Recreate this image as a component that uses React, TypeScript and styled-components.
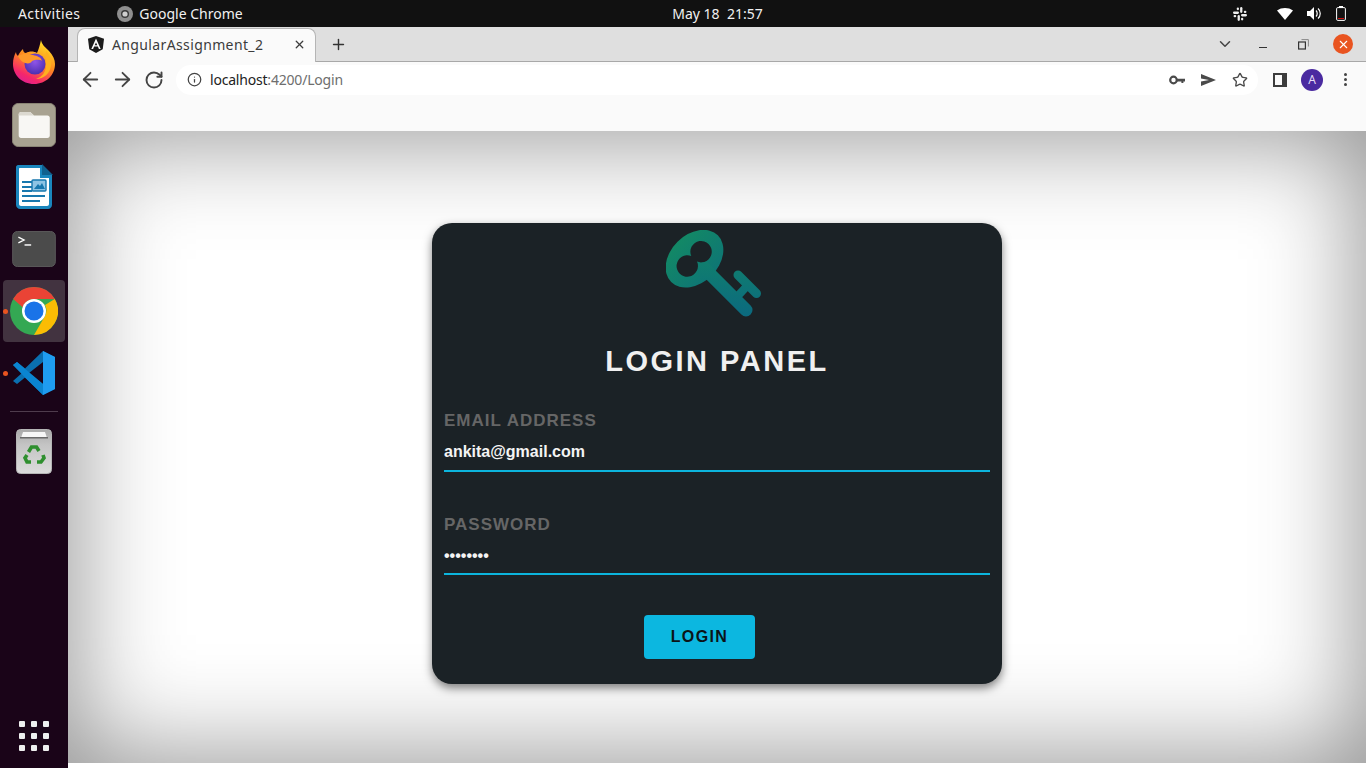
import React from 'react'
import styled, { createGlobalStyle } from 'styled-components'
import { ArrowLeft, ArrowRight, RotateCw, Info, Star, Plus, X, ChevronDown } from 'lucide-react'

const GlobalStyle = createGlobalStyle`
  html, body {
    margin: 0;
    padding: 0;
    height: 100%;
    overflow: hidden;
    background: #fff;
    font-family: 'Liberation Sans', Arial, sans-serif;
  }
  * { box-sizing: border-box; }
`

const App: React.FC = () => {
  return (
    <Screen>
      <GlobalStyle />
      <TopBar>
        <TopLeft>
          <Activities>Activities</Activities>
          <AppName>
            <svg width='16' height='16' viewBox='0 0 16 16'>
              <circle cx='8' cy='8' r='8' fill='#8f8f8f' />
              <circle cx='8' cy='8' r='4' fill='#3a3a3a' />
              <circle cx='8' cy='8' r='2.6' fill='#cfcfcf' />
            </svg>
            <TopText>Google Chrome</TopText>
          </AppName>
        </TopLeft>
        <Clock>May 18&nbsp;&nbsp;21:57</Clock>
        <TopRight>
          <SlackIcon />
          <TrayGroup>
            <svg width='16' height='12' viewBox='0 0 16 12'>
              <path d='M0 2.5C4.5-.8 11.5-.8 16 2.5L8 12z' fill='#fff' />
            </svg>
            <svg width='15' height='13' viewBox='0 0 15 13'>
              <path d='M0 4h3l4-4v13l-4-4H0z' fill='#fff' />
              <path d='M9 3.5c1.6 1.5 1.6 4.5 0 6M11 1.5c3 2.6 3 7.4 0 10' stroke='#fff' strokeWidth='1.2' fill='none' />
            </svg>
            <svg width='10' height='15' viewBox='0 0 10 15'>
              <rect x='.6' y='1.6' width='8.8' height='12.8' rx='1.2' fill='none' stroke='#fff' strokeWidth='1' />
              <rect x='3' y='0' width='4' height='2' fill='#fff' />
              <rect x='2' y='12' width='6' height='1' fill='#d01010' />
            </svg>
          </TrayGroup>
        </TopRight>
      </TopBar>
      <Desktop>
        <Dock>
          <DockItem $h={64}><FirefoxIcon /></DockItem>
          <DockItem $h={62}><FilesIcon /></DockItem>
          <DockItem $h={62}><WriterIcon /></DockItem>
          <DockItem $h={62}><TerminalIcon /></DockItem>
          <DockItem $h={62} $active $running><ChromeIcon /></DockItem>
          <DockItem $h={62} $running><VsCodeIcon /></DockItem>
          <DockDivider />
          <DockItem $h={62}><TrashIcon /></DockItem>
          <DockSpacer />
          <GridDots>
            {Array.from({ length: 9 }).map((_, i) => <span key={i} />)}
          </GridDots>
        </Dock>
        <Browser>
          <TabStrip>
            <Tab>
              <AngularIcon />
              <TabTitle>AngularAssignment_2</TabTitle>
              <X size={13} strokeWidth={2.4} color='#3c3c3c' />
            </Tab>
            <NewTab><Plus size={17} strokeWidth={2} /></NewTab>
            <WindowControls>
              <ChevronSlot><ChevronDown size={18} strokeWidth={2} color='#444' /></ChevronSlot>
              <ControlSlot><MinimizeMark /></ControlSlot>
              <ControlSlot>
                <svg width='11' height='11' viewBox='0 0 11 11'>
                  <rect x='.6' y='3' width='6.8' height='7' fill='none' stroke='#333' strokeWidth='1.2' />
                  <path d='M3.5 .6h6.900V7.500' fill='none' stroke='#888' strokeWidth='1' />
                </svg>
              </ControlSlot>
              <ControlSlot><CloseCircle><X size={13} strokeWidth={2} color='#fff' /></CloseCircle></ControlSlot>
            </WindowControls>
          </TabStrip>
          <Toolbar>
            <NavIcons>
              <ArrowLeft size={23} strokeWidth={1.9} />
              <ArrowRight size={23} strokeWidth={1.9} />
              <RotateCw size={20} strokeWidth={2.3} />
            </NavIcons>
            <Omnibox>
              <Info size={15} strokeWidth={2} color='#444' />
              <UrlText>localhost<UrlMuted>:4200/Login</UrlMuted></UrlText>
              <OmniActions>
                <svg width='16' height='10' viewBox='0 0 16 10'>
                  <circle cx='4.5' cy='5' r='3.3' fill='none' stroke='#4a4a4a' strokeWidth='2.2' />
                  <path d='M8 3.8h8v2.6h-1.6V8h-2V6.4H8z' fill='#4a4a4a' />
                </svg>
                <svg width='15' height='12' viewBox='0 0 15 12'>
                  <path d='M0 0l15 6-15 6 0-4.6L8 6 0 4.6z' fill='#4a4a4a' />
                </svg>
                <Star size={16} strokeWidth={2} color='#4a4a4a' />
              </OmniActions>
            </Omnibox>
            <ToolbarRight>
              <SidePanelIcon><span /></SidePanelIcon>
              <Avatar>A</Avatar>
              <MoreDots><i /><i /><i /></MoreDots>
            </ToolbarRight>
          </Toolbar>
          <BookmarkBar />
          <Page>
            <Card>
              <KeyIcon />
              <Title>LOGIN PANEL</Title>
              <Field $top={34} $h={61}>
                <FieldLabel>EMAIL ADDRESS</FieldLabel>
                <FieldValue>ankita@gmail.com</FieldValue>
              </Field>
              <Field $top={43} $h={60}>
                <FieldLabel>PASSWORD</FieldLabel>
                <FieldValue>••••••••</FieldValue>
              </Field>
              <LoginButton>LOGIN</LoginButton>
            </Card>
          </Page>
        </Browser>
      </Desktop>
    </Screen>
  )
}

const SlackIcon = () => (
  <svg width='14' height='14' viewBox='0 0 14 14' fill='#eee'>
    <rect x='0' y='4.600' width='6' height='2.300' rx='1.150' />
    <rect x='3.700' y='.6' width='2.300' height='2.600' rx='1.100' />
    <rect x='7.100' y='0' width='2.300' height='6' rx='1.150' />
    <rect x='10.800' y='3.700' width='2.600' height='2.300' rx='1.100' />
    <rect x='8' y='7.100' width='6' height='2.300' rx='1.150' />
    <rect x='8' y='10.800' width='2.300' height='2.600' rx='1.100' />
    <rect x='4.600' y='8' width='2.300' height='6' rx='1.150' />
    <rect x='.6' y='8' width='2.600' height='2.300' rx='1.100' />
  </svg>
)

const FirefoxIcon = () => (
  <svg width='44' height='46' viewBox='0 0 44 46'>
    <defs>
      <linearGradient id='ff1' x1='0.7' y1='0' x2='0.2' y2='1'>
        <stop offset='0' stopColor='#ffe226' />
        <stop offset='0.45' stopColor='#ff8a1f' />
        <stop offset='0.8' stopColor='#f5266c' />
        <stop offset='1' stopColor='#d81f9a' />
      </linearGradient>
      <radialGradient id='ff2' cx='0.5' cy='0.4' r='0.6'>
        <stop offset='0' stopColor='#8f55e8' />
        <stop offset='1' stopColor='#4d2fb0' />
      </radialGradient>
    </defs>
    <path d='M29 1c1 5 4 7 8 11 4 4 6 9 6 13 0 11-9 20-21 20C10 45 1 36 1 25c0-5 1-8 3-12 0 2 1 3 2 4 1-3 3-5 5-7 0 2 1 4 3 4 3-2 8-2 11 0 2-4 3-9 4-13z' fill='url(#ff1)' />
    <circle cx='23' cy='25' r='10.500' fill='url(#ff2)' />
    <path d='M6 17c5-3 10-2 15-1 4 1 8 2 9 6-3-2-7-1-10 0-1 3-6 3-9 1-2-1-4-4-5-6z' fill='#ff9a2a' />
    <path d='M34 12c4 4 6 9 5 15-1 7-7 13-15 13 6-2 10-7 10-14 0-5-1-10 0-14z' fill='#ffb01f' />
  </svg>
)

const FilesIcon = () => (
  <svg width='44' height='44' viewBox='0 0 46 46'>
    <rect x='0.5' y='0.5' width='45' height='45' rx='6' fill='#a8a291' stroke='#8d8878' />
    <path d='M7 12c0-1.500 1-2.500 2.500-2.500H19l4 3.500h14c1.500 0 2.500 1 2.500 2.500V34c0 1.500-1 2.500-2.500 2.500H9.500C8 36.500 7 35.500 7 34z' fill='#f8f7f4' />
    <path d='M7 12c0-1.500 1-2.500 2.500-2.500H19l4 3.500H7z' fill='#dcd9d0' />
  </svg>
)

const WriterIcon = () => (
  <svg width='38' height='46' viewBox='0 0 38 46'>
    <path d='M3 1h24l10 10v30c0 2-2 4-4 4H5c-2 0-4-2-4-4V3c0-1 1-2 2-2z' fill='#1a86bd' />
    <path d='M5 4h20v10h9v26c0 1-1 2-2 2H6c-1 0-2-1-2-2V5c0-.6.4-1 1-1z' fill='#fff' />
    <path d='M27 0l11 11H27z' fill='#10618f' />
    <rect x='7' y='17' width='10' height='2' fill='#1878ae' />
    <rect x='7' y='22' width='10' height='2' fill='#1878ae' />
    <rect x='7' y='26' width='10' height='2' fill='#1878ae' />
    <rect x='7' y='31' width='23' height='2' fill='#1878ae' />
    <rect x='7' y='36' width='18' height='2' fill='#1878ae' />
    <rect x='17' y='16' width='14' height='11' rx='1' fill='#8ec4e4' stroke='#1878ae' strokeWidth='1.400' />
    <path d='M19 25l4-5 2 2 2-3 3 6z' fill='#1878ae' />
  </svg>
)

const TerminalIcon = () => (
  <svg width='44' height='36' viewBox='0 0 46 38'>
    <rect x='0.5' y='0.5' width='45' height='37' rx='5' fill='#4b4b4b' stroke='#5c5c5c' />
    <path d='M6.500 6.500l6 3-6 3' stroke='#fff' strokeWidth='1.400' fill='none' />
    <rect x='13' y='14' width='7' height='1.500' fill='#fff' />
  </svg>
)

const ChromeIcon = () => (
  <svg width='48' height='48' viewBox='0 0 48 48'>
    <circle cx='24' cy='24' r='24' fill='#34a853' />
    <path d='M24 0a24 24 0 0 1 20.800 12H24a12 12 0 0 0-11.400 8.200L3.200 12A24 24 0 0 1 24 0z' fill='#ea4335' />
    <path d='M44.800 12A24 24 0 0 1 24 48l10.400-18A12 12 0 0 0 35 18z' fill='#fbbc04' />
    <circle cx='24' cy='24' r='12' fill='#fff' />
    <circle cx='24' cy='24' r='9.500' fill='#1a73e8' />
  </svg>
)

const VsCodeIcon = () => (
  <svg width='44' height='44' viewBox='0 0 44 44'>
    <path d='M31 0l12 6v32l-12 6-18-17.500L5 33l-4-3 9-8-9-8 4-3 8 6.500z' fill='#0a6fb0' />
    <path d='M31 0l12 6v32l-12 6z' fill='#1f9cf0' />
    <path d='M31 11L17 22l14 11z' fill='#1a0418' />
    <path d='M1 14l4-3 26 22v11L13 26.500z' fill='#0a85d1' />
  </svg>
)

const TrashIcon = () => (
  <svg width='36' height='45' viewBox='0 0 36 45'>
    <defs>
      <linearGradient id='tr' x1='0' y1='0' x2='0' y2='1'>
        <stop offset='0' stopColor='#a9a9a9' />
        <stop offset='0.35' stopColor='#c4c4c4' />
        <stop offset='1' stopColor='#dcdcdc' />
      </linearGradient>
    </defs>
    <rect x='0.5' y='0.5' width='35' height='44' rx='4' fill='url(#tr)' stroke='#b5b5b5' />
    <path d='M5 9l2-6h22l2 6z' fill='#f6f6f6' />
    <rect x='4' y='8' width='28' height='1.500' fill='#6a6a6a' />
    <g fill='none' stroke='#2f8f2f' strokeWidth='3.600'>
      <path d='M12.500 23l3-5h5l2.500 4' />
      <path d='M27 26l1 3-3 4h-4' />
      <path d='M15 33h-4l-2-4 2-3' />
    </g>
  </svg>
)

const AngularIcon = () => (
  <svg width='16' height='17' viewBox='0 0 16 17'>
    <path d='M8 0l8 2.800-1.300 10.500L8 17l-6.700-3.700L0 2.800z' fill='#1c1c1c' />
    <path d='M8 2.500L3.300 13h1.800l1-2.400h3.800l1 2.400h1.800zM8 6.400l1.300 2.800H6.700z' fill='#fff' />
  </svg>
)

const KeyIcon = () => (
  <KeySvg width='96' height='90' viewBox='0 0 96 90'>
    <defs>
      <linearGradient id='keyFill' gradientUnits='userSpaceOnUse' x1='0' y1='0' x2='0' y2='90'>
        <stop offset='0' stopColor='#138a64' />
        <stop offset='1' stopColor='#0b6880' />
      </linearGradient>
    </defs>
    <g fill='url(#keyFill)' stroke='url(#keyFill)'>
      <ellipse cx='28.5' cy='28.7' rx='33' ry='24' transform='rotate(-45 28.5 28.7)' stroke='none' />
      <path d='M30 30L80 80' strokeWidth='13' strokeLinecap='round' fill='none' />
      <path d='M69 69L81 56' strokeWidth='8' fill='none' />
      <path d='M72 45L90.500 63.500' strokeWidth='9' strokeLinecap='round' fill='none' />
    </g>
    <path
      fill='#1b2226'
      d='M25.300 26.100A10.700 10.700 0 1 1 31 31.600A10.700 10.700 0 1 1 25.300 26.100z'
    />
  </KeySvg>
)

const Screen = styled.div`
  width: 1366px;
  height: 768px;
  display: flex;
  flex-direction: column;
  overflow: hidden;
`

const TopBar = styled.header`
  height: 27px;
  background: #111111;
  display: grid;
  grid-template-columns: 1fr auto 1fr;
  align-items: center;
  padding: 0 20px 0 18px;
  flex-shrink: 0;
`

const TopLeft = styled.div`
  display: flex;
  align-items: center;
  gap: 37px;
`

const TopText = styled.span`
  font-family: 'Noto Sans', 'Open Sans', sans-serif;
  font-size: 14px;
  color: #f0f0f0;
  white-space: nowrap;
`

const Activities = styled(TopText)`
  letter-spacing: 0.4px;
`

const AppName = styled.div`
  display: flex;
  align-items: center;
  gap: 6px;
`

const Clock = styled(TopText)`
  margin-left: 71px;
`

const TopRight = styled.div`
  display: flex;
  justify-content: flex-end;
  align-items: center;
  gap: 30px;
`

const TrayGroup = styled.div`
  display: flex;
  align-items: center;
  gap: 14px;
`

const Desktop = styled.div`
  flex: 1;
  display: flex;
  min-height: 0;
`

const Dock = styled.nav`
  width: 68px;
  background: #1a0418;
  display: flex;
  flex-direction: column;
  align-items: center;
  padding: 3px 0 17px;
  flex-shrink: 0;
`

const DockItem = styled.div<{ $h: number; $active?: boolean; $running?: boolean }>`
  position: relative;
  width: 62px;
  height: ${(p) => p.$h}px;
  display: flex;
  align-items: center;
  justify-content: center;
  border-radius: 4px;
  background: ${(p) => (p.$active ? '#423340' : 'transparent')};

  &::before {
    content: '';
    display: ${(p) => (p.$running ? 'block' : 'none')};
    position: absolute;
    left: 0;
    top: 50%;
    width: 5px;
    height: 5px;
    margin-top: -2px;
    border-radius: 50%;
    background: #e95420;
  }
`

const DockDivider = styled.div`
  width: 48px;
  height: 1px;
  background: #4f3c4d;
  margin: 7px 0 8px;
`

const DockSpacer = styled.div`
  flex: 1;
`

const GridDots = styled.div`
  display: grid;
  grid-template-columns: repeat(3, 6px);
  grid-auto-rows: 6px;
  gap: 6px;

  span {
    background: #eeeeee;
    border-radius: 1px;
  }
`

const Browser = styled.main`
  flex: 1;
  display: flex;
  flex-direction: column;
  min-width: 0;
  background: #fff;
`

const TabStrip = styled.div`
  height: 34px;
  background: #dfdfdf;
  display: flex;
  align-items: flex-end;
  padding-left: 9px;
  flex-shrink: 0;
`

const Tab = styled.div`
  position: relative;
  z-index: 1;
  width: 239px;
  height: 34px;
  margin-bottom: -1px;
  background: #fafafa;
  border: 1px solid #b5b5b5;
  border-bottom: none;
  border-radius: 8px 8px 0 0;
  display: flex;
  align-items: center;
  padding: 0 9px 3px 10px;
`

const TabTitle = styled.span`
  font-family: 'Noto Sans', 'Open Sans', sans-serif;
  font-size: 14px;
  letter-spacing: 0.37px;
  color: #3c3c3c;
  margin-left: 8px;
  flex: 1;
`

const NewTab = styled.div`
  width: 44px;
  height: 34px;
  display: flex;
  align-items: center;
  justify-content: center;
  color: #333;
`

const WindowControls = styled.div`
  margin-left: auto;
  height: 34px;
  display: flex;
  align-items: center;
  padding-right: 3px;
`

const ControlSlot = styled.div`
  width: 40px;
  display: flex;
  align-items: center;
  justify-content: center;
`

const ChevronSlot = styled(ControlSlot)`
  padding-left: 3px;
`

const MinimizeMark = styled.div`
  width: 8px;
  height: 1px;
  background: #333;
  margin-top: 7px;
`

const CloseCircle = styled.div`
  width: 20px;
  height: 20px;
  border-radius: 50%;
  background: #e95420;
  display: flex;
  align-items: center;
  justify-content: center;
`

const Toolbar = styled.div`
  height: 36px;
  background: #fafafa;
  border-top: 1px solid #a8a8a8;
  display: flex;
  align-items: center;
  padding: 0 0 0 11px;
  flex-shrink: 0;
`

const NavIcons = styled.div`
  width: 97px;
  display: flex;
  align-items: center;
  gap: 9px;
  color: #444;

  svg:last-child {
    margin-left: 1px;
  }
`

const Omnibox = styled.div`
  width: 1082px;
  height: 30px;
  background: #fff;
  border-radius: 15px;
  display: flex;
  align-items: center;
  padding: 0 10px 0 11px;
`

const UrlText = styled.span`
  font-family: 'Noto Sans', 'Open Sans', sans-serif;
  font-size: 14px;
  letter-spacing: -0.2px;
  color: #222;
  margin-left: 8px;
`

const UrlMuted = styled.span`
  color: #6e6e6e;
`

const OmniActions = styled.div`
  margin-left: auto;
  display: flex;
  align-items: center;
  gap: 16px;
`

const ToolbarRight = styled.div`
  flex: 1;
  display: flex;
  align-items: center;
  padding-left: 15px;
`

const SidePanelIcon = styled.div`
  width: 14px;
  height: 14px;
  background: #3c3c3c;
  padding: 2px 5px 2px 2px;

  span {
    display: block;
    width: 100%;
    height: 100%;
    background: #fafafa;
  }
`

const Avatar = styled.div`
  width: 22px;
  height: 22px;
  margin: 0 21px 0 14px;
  border-radius: 50%;
  background: #4a2aa0;
  color: #e4dcf5;
  font-family: 'Noto Sans', sans-serif;
  font-size: 12px;
  display: flex;
  align-items: center;
  justify-content: center;
`

const MoreDots = styled.div`
  display: flex;
  flex-direction: column;
  gap: 2px;

  i {
    display: block;
    width: 3px;
    height: 3px;
    border-radius: 50%;
    background: #444;
  }
`

const BookmarkBar = styled.div`
  height: 34px;
  background: #fafafa;
  flex-shrink: 0;
`

const Page = styled.section`
  height: 632px;
  flex-shrink: 0;
  background: #ffffff;
  box-shadow: inset 0 0 100px 8px rgba(0, 0, 0, 0.42);
  display: flex;
  justify-content: center;
  align-items: flex-start;
  padding-top: 92px;
`

const Card = styled.div`
  width: 570px;
  height: 461px;
  background: #1b2226;
  border-radius: 20px;
  box-shadow: 0 4px 10px rgba(0, 0, 0, 0.5);
  padding: 7px 12px 0;
  display: flex;
  flex-direction: column;
`

const KeySvg = styled.svg`
  align-self: center;
  margin-right: 6px;
  flex-shrink: 0;
`

const Title = styled.h1`
  margin: 25px 0 0;
  text-align: center;
  font-size: 29px;
  line-height: 32px;
  font-weight: 700;
  letter-spacing: 2.5px;
  color: #f0f0f0;
`

const Field = styled.div<{ $top: number; $h: number }>`
  margin-top: ${(p) => p.$top}px;
  height: ${(p) => p.$h}px;
  border-bottom: 2px solid #0cb5dd;
`

const FieldLabel = styled.div`
  font-size: 17px;
  line-height: 20px;
  font-weight: 700;
  letter-spacing: 1px;
  color: #666666;
`

const FieldValue = styled.div`
  margin-top: 11px;
  font-size: 16px;
  line-height: 20px;
  font-weight: 700;
  color: #f4f4f4;
`

const LoginButton = styled.button`
  align-self: flex-start;
  margin: 40px 0 0 200px;
  width: 111px;
  height: 44px;
  border: none;
  border-radius: 4px;
  background: #0cb7e0;
  color: #0c1417;
  font-family: 'Liberation Sans', Arial, sans-serif;
  font-size: 16px;
  font-weight: 700;
  letter-spacing: 1.4px;
`

export default App
